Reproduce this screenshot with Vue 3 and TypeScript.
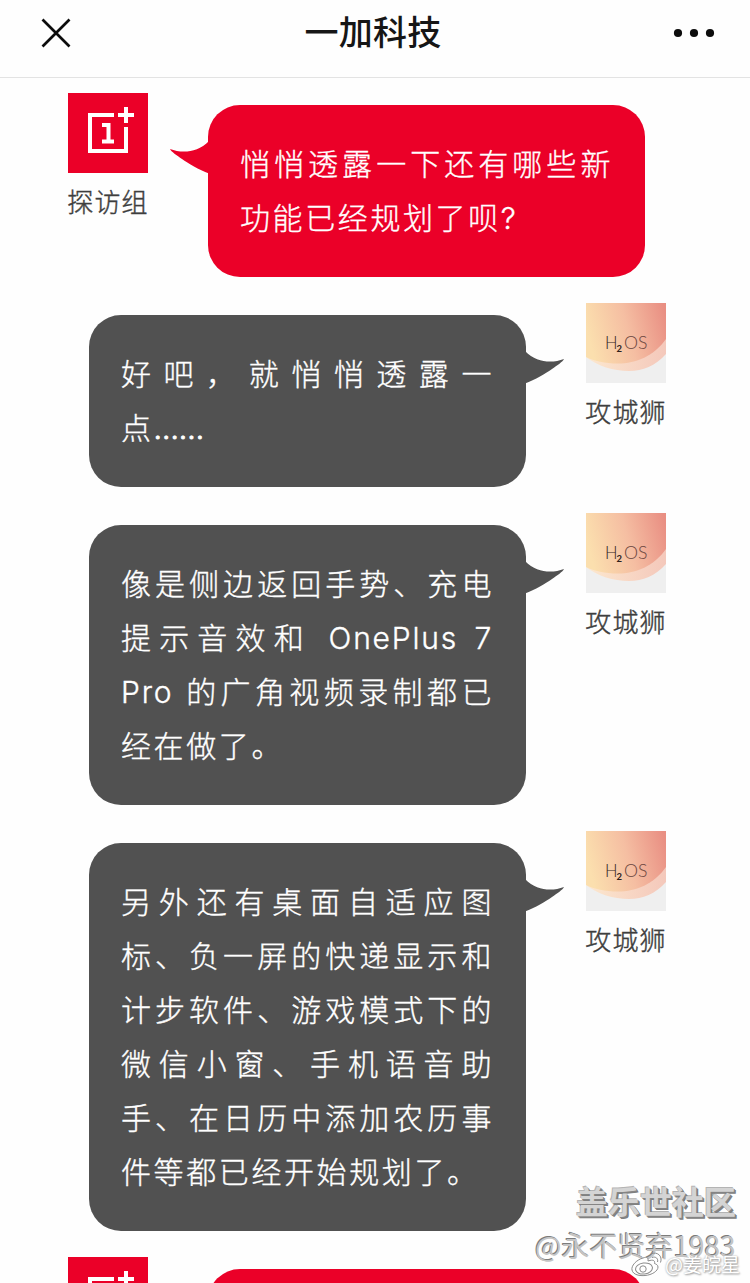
<script setup lang="ts">
interface Message {
  id: number
  from: 'visitor' | 'engineer'
  name?: string
  lines: string[]
}

interface Part {
  text: string
  kind: 'han' | 'latin' | 'dots'
}

const messages: Message[] = [
  { id: 1, from: 'visitor', name: '探访组', lines: ['悄悄透露一下还有哪些新', '功能已经规划了呗?'] },
  { id: 2, from: 'engineer', name: '攻城狮', lines: ['好吧，就悄悄透露一', '点……'] },
  {
    id: 3,
    from: 'engineer',
    name: '攻城狮',
    lines: ['像是侧边返回手势、充电', '提示音效和 OnePlus 7', 'Pro 的广角视频录制都已', '经在做了。'],
  },
  {
    id: 4,
    from: 'engineer',
    name: '攻城狮',
    lines: [
      '另外还有桌面自适应图',
      '标、负一屏的快递显示和',
      '计步软件、游戏模式下的',
      '微信小窗、手机语音助',
      '手、在日历中添加农历事',
      '件等都已经开始规划了。',
    ],
  },
  { id: 5, from: 'visitor', lines: [] },
]

function split(line: string): Part[] {
  return line
    .split(/([A-Za-z]+|…+)/)
    .filter((text) => text !== '')
    .map((text) => ({
      text,
      kind: /^[A-Za-z]/.test(text) ? 'latin' : text.startsWith('…') ? 'dots' : 'han',
    }))
}
</script>

<template>
  <div class="screen">
    <header class="bar">
      <svg class="close" viewBox="0 0 30 30" width="30" height="30">
        <path d="M1.5 1.5 28.5 28.5M28.5 1.5 1.5 28.5" fill="none" stroke="#0c0c0c" stroke-width="2.7" />
      </svg>
      <h1 class="title">一加科技</h1>
      <svg class="more" viewBox="0 0 42 10" width="42" height="10">
        <circle cx="5" cy="5" r="4.1" />
        <circle cx="21" cy="5" r="4.1" />
        <circle cx="37" cy="5" r="4.1" />
      </svg>
    </header>

    <main class="chat">
      <section v-for="m in messages" :key="m.id" class="row" :class="m.from">
        <div class="person">
          <svg v-if="m.from === 'visitor'" class="avatar" viewBox="0 0 80 80">
            <rect width="80" height="80" fill="#eb0028" />
            <path d="M46 22H22V58H58V34" fill="none" stroke="#fff" stroke-width="4" />
            <path d="M58 14V30M50 22H66" fill="none" stroke="#fff" stroke-width="4" />
            <path d="M34 32H40.5V48M34 48.5H46" fill="none" stroke="#fff" stroke-width="4" />
          </svg>
          <svg v-else class="avatar" viewBox="0 0 80 80">
            <defs>
              <linearGradient :id="`warm${m.id}`" x1="0" y1="0.4" x2="1" y2="0.2">
                <stop offset="0" stop-color="#fbdfae" />
                <stop offset="0.5" stop-color="#f5bea2" />
                <stop offset="1" stop-color="#e98f83" />
              </linearGradient>
              <linearGradient :id="`pale${m.id}`" x1="0" y1="0" x2="1" y2="0">
                <stop offset="0" stop-color="#fce8cf" />
                <stop offset="1" stop-color="#f4c8bb" />
              </linearGradient>
            </defs>
            <rect width="80" height="80" fill="#efefef" />
            <path d="M0 0H80V51C69 63 57 68 43 68C27 68 12 63 0 54Z" :fill="`url(#pale${m.id})`" />
            <path d="M0 0H80V36C68 53 50 60.500 32 60.500C19 60.500 8 58 0 54Z" :fill="`url(#warm${m.id})`" />
            <g class="logo">
              <text x="19" y="46" textLength="12.500" lengthAdjust="spacingAndGlyphs" fill="#32251f">H</text>
              <text class="sub" x="30.500" y="49" fill="#2c201b">2</text>
              <text x="38" y="46" textLength="23.500" lengthAdjust="spacingAndGlyphs" fill="#6b4640">OS</text>
            </g>
          </svg>
          <span v-if="m.name" class="name">{{ m.name }}</span>
        </div>
        <div class="bubble">
          <svg class="tail" viewBox="0 0 40 34" width="40" height="34">
            <path d="M1 8C13 12.500 28 12 40 0V32.500C30 29 19 22 13 18C8 14.500 2 10.500 1 8Z" />
          </svg>
          <p v-for="(line, i) in m.lines" :key="i" class="line" :class="{ last: i === m.lines.length - 1 }"><span v-for="(p, j) in split(line)" :key="j" :class="p.kind">{{ p.text }}</span></p>
        </div>
      </section>
    </main>

    <div class="mark community">盖乐世社区</div>
    <div class="mark author">@永不贤弃1983</div>
    <div class="mark weibo">
      <svg viewBox="0 0 32 26" width="32" height="26" fill="none" stroke="#8c8c8c" stroke-width="1">
        <path d="M12 7C5 9 0 15 1 19C2 24 9 25 14 24.500C21 24 27 20 27 16C27 14 25 13 23.500 12.500C24 10 23 8 17 10C17.500 7 16 5.500 12 7Z" fill="#fff" />
        <ellipse cx="13" cy="17.500" rx="8.500" ry="5.500" transform="rotate(-8 13 17.500)" />
        <circle cx="12" cy="18" r="3.200" />
        <path d="M20 3C26 0 32 5 29.500 11.500M21 6.500C25 5 27.500 8 26.500 11" />
      </svg>
      <span>@姜皖星</span>
    </div>
  </div>
</template>

<style>
body {
  background: #fff;
}
</style>

<style scoped>
.screen {
  position: relative;
  width: 750px;
  height: 1283px;
  overflow: hidden;
  background: #fefefe;
  font-family: Inter, 'Noto Sans CJK SC', sans-serif;
  text-spacing-trim: space-all;
}

.bar {
  display: flex;
  align-items: center;
  justify-content: space-between;
  box-sizing: border-box;
  height: 78px;
  padding: 0 35px 12px 41px;
  border-bottom: 1px solid #e3e3e3;
}

.close,
.more {
  display: block;
}

.more {
  fill: #0c0c0c;
}

.title {
  margin: 0;
  padding-top: 1px;
  padding-left: 2px;
  color: #161616;
  font-size: 34px;
  font-weight: 500;
  line-height: 48px;
  letter-spacing: 0.2px;
}

.chat {
  display: flex;
  flex-direction: column;
  gap: 26px;
  padding-top: 15px;
}

.row {
  display: flex;
  align-items: flex-start;
  gap: 60px;
}

.visitor {
  padding-left: 68px;
}

.engineer {
  flex-direction: row-reverse;
  padding-right: 84px;
}

.person {
  display: flex;
  flex-direction: column;
  align-items: center;
  width: 80px;
}

.avatar {
  display: block;
  width: 80px;
  height: 80px;
}

.logo {
  font-family: Lato, sans-serif;
  font-size: 18px;
  font-weight: 300;
}

.logo .sub {
  font-size: 9.5px;
  font-weight: 700;
}

.name {
  margin-top: 11px;
  color: #3e3e3e;
  font-size: 26px;
  line-height: 38px;
  font-weight: 300;
  letter-spacing: 1.2px;
  white-space: nowrap;
  -webkit-text-stroke: 0.4px currentColor;
}

.bubble {
  position: relative;
  box-sizing: border-box;
  width: 437px;
  min-height: 172px;
  margin-top: 12px;
  padding: 32px;
  border-radius: 32px;
  color: #fff;
}

.visitor .bubble {
  background: #eb0028;
}

.engineer .bubble {
  background: #515151;
}

.tail {
  position: absolute;
  top: 36px;
  left: -39px;
  fill: #eb0028;
  filter: blur(0.5px);
}

.engineer .tail {
  right: -39px;
  left: auto;
  fill: #515151;
  transform: scaleX(-1);
}

.line {
  margin: 0;
  font-size: 30px;
  font-weight: 300;
  line-height: 54px;
  letter-spacing: 2.6px;
  white-space: nowrap;
  text-align: justify;
  text-align-last: justify;
  -webkit-text-stroke: 0.35px currentColor;
}

.line.last {
  text-align-last: left;
}

.latin {
  letter-spacing: 1.8px;
}

.dots {
  letter-spacing: -0.3px;
  -webkit-text-stroke-width: 0.8px;
}

.mark {
  position: absolute;
  white-space: nowrap;
  font-family: 'Noto Sans CJK SC', sans-serif;
}

.community {
  top: 1176px;
  left: 576px;
  color: #d4d4d4;
  font-size: 32px;
  font-weight: 700;
  line-height: 48px;
  text-shadow: 1px 1px 0 #858585, 2px 2px 0 #808080, -1px -1px 0 #b4b4b4;
}

.author {
  top: 1225px;
  left: 535px;
  color: #c4c4c4;
  font-size: 28px;
  line-height: 40px;
  text-shadow: -1px -1px 0 #7c7c7c;
}

.weibo {
  top: 1250px;
  left: 631px;
  display: flex;
  align-items: center;
  gap: 2px;
  color: #fff;
  font-size: 19px;
  line-height: 28px;
  text-shadow: 1px 1px 2px #999, 0 0 2px #aaa;
}
</style>
